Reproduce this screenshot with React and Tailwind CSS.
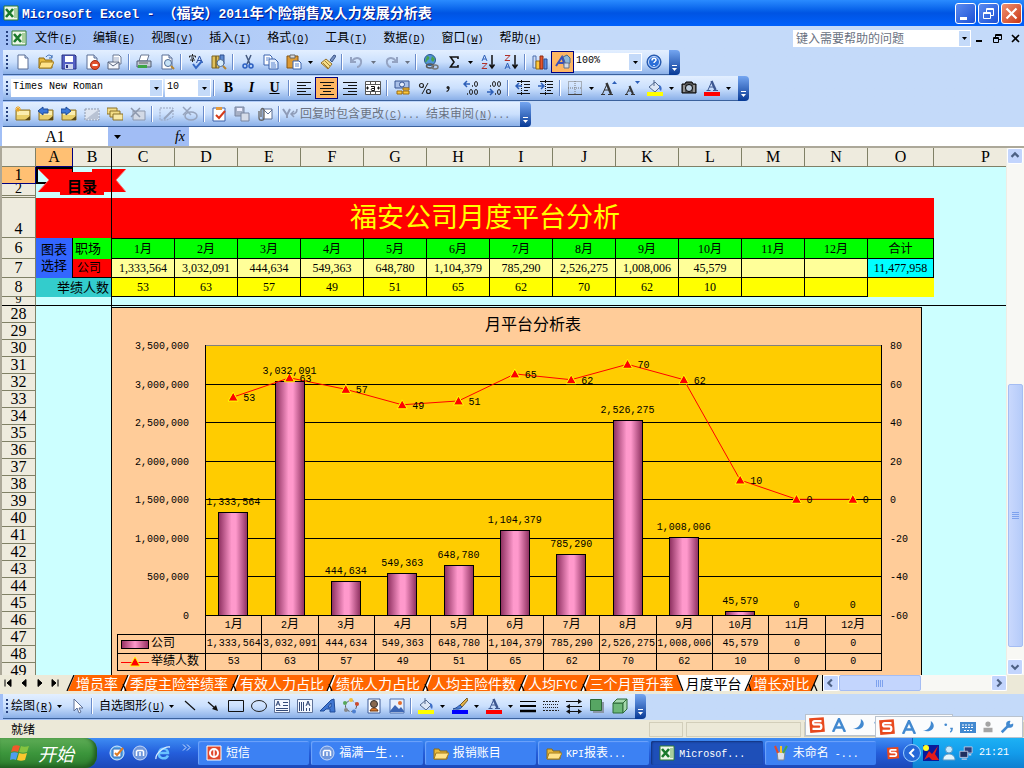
import React, { useState } from 'react';

const MONO = "font-[family-name:'Liberation_Mono','Noto_Sans_CJK_SC',monospace]";
const SERIF = "font-[family-name:'Liberation_Serif','Noto_Sans_CJK_SC',serif]";

const months = ['1月', '2月', '3月', '4月', '5月', '6月', '7月', '8月', '9月', '10月', '11月', '12月'];
const sales = [1333564, 3032091, 444634, 549363, 648780, 1104379, 785290, 2526275, 1008006, 45579, 0, 0];
const heads = [53, 63, 57, 49, 51, 65, 62, 70, 62, 10, 0, 0];
const columns = ['C', 'D', 'E', 'F', 'G', 'H', 'I', 'J', 'K', 'L', 'M', 'N'];
const lowerRows = Array.from({ length: 22 }, (_, i) => 28 + i);

const fmt = (n) => n.toLocaleString('en-US');

const menus = [
  ['文件', 'F'],
  ['编辑', 'E'],
  ['视图', 'V'],
  ['插入', 'I'],
  ['格式', 'O'],
  ['工具', 'T'],
  ['数据', 'D'],
  ['窗口', 'W'],
  ['帮助', 'H'],
];

const note = (
  <>
    <path d="M1 4h14v10H1z" fill="#e9cf6a" stroke="#8a7128" />
    <path d="M2 5h12v4H2z" fill="#fbeeb0" />
    <path d="M10 14l5-4v4z" fill="#5c4a16" />
  </>
);

const page = (
  <>
    <path d="M3 1h7l3 3v11H3z" fill="#fff" stroke="#5a6e96" />
    <path d="M10 1v3h3" fill="#c9d8f0" stroke="#5a6e96" />
  </>
);

const folder = (
  <>
    <path d="M1 4h5l1 2h7v8H1z" fill="#e8b93c" stroke="#8d6a12" />
    <path d="M3 8h13l-3 6H1z" fill="#ffe38a" stroke="#a37c1c" />
  </>
);

const picture = (
  <>
    <path d="M1 1h14v14H1z" fill="#e9f1fc" stroke="#4d6fae" />
    <path d="M1 13l5-6 4 4 2-2 3 4v1H1z" fill="#3c66b4" />
    <circle cx="11" cy="5" r="2" fill="#e46d2c" />
  </>
);

const bucket = (
  <>
    <path d="M2 7l6-5 5 5-5 5z" fill="#dce6f5" stroke="#53698f" />
    <path d="M7 0v6" stroke="#53698f" />
    <path d="M12 5c3 1 3 4 2 6-2-1-2-3-2-6z" fill="#3e6fc8" />
  </>
);

const excel = (
  <>
    <path d="M1 1h14v14H1z" fill="#eef7e9" stroke="#2f7d32" />
    <path d="M11 3h3v10h-3z" fill="#a7cf9c" />
    <path d="M3 4l7 8M10 4l-7 8" stroke="#1b7a2c" strokeWidth="2.6" />
  </>
);

const paintIcon = {
  new: page,
  open: (
    <>
      {folder}
      <path d="M8 3c2-3 5-2 6 0m0-2v3h-3" fill="none" stroke="#3466b0" />
    </>
  ),
  save: (
    <>
      <path d="M1 1h13l1 1v13H1z" fill="#5560c4" stroke="#2b3383" />
      <path d="M4 2h8v6H4z" fill="#fff" />
      <path d="M4 10h8v5H4z" fill="#cfd6ee" />
      <path d="M5 11h2v3H5z" fill="#2b3383" />
    </>
  ),
  permission: (
    <>
      {page}
      <circle cx="11" cy="11" r="4.5" fill="#e4502d" stroke="#a32c10" />
      <path d="M8.5 11h5" stroke="#fff" strokeWidth="2" />
    </>
  ),
  mail: (
    <>
      <path d="M6 1h6l2 2v7H6z" fill="#fff" stroke="#6a7893" />
      <path d="M7 4h5M7 6h5" stroke="#9aa9c5" />
      <path d="M1 8h11v7H1z" fill="#f3f6fb" stroke="#58657f" />
      <path d="M1 8l5 4 6-4" fill="none" stroke="#58657f" />
    </>
  ),
  print: (
    <>
      <path d="M5 1h8l-2 6H3z" fill="#fff" stroke="#6a7893" />
      <path d="M1 7h14v6H1z" fill="#c4cbd6" stroke="#4f5b70" />
      <path d="M2 11h9v3H2z" fill="#3ca545" />
      <path d="M3 9h9" stroke="#666" />
    </>
  ),
  preview: (
    <>
      {page}
      <circle cx="9" cy="9" r="3.5" fill="#c6e2f7" stroke="#4e6a94" />
      <path d="M12 12l3 3" stroke="#b5852d" strokeWidth="2" />
    </>
  ),
  spell: (
    <>
      <path d="M1.5 3.500V2h6v1.500M4.500 0v2M3 4h3L4.500 5.500V8M2 6h5" fill="none" stroke="#222" />
      <path d="M8.500 9l3-7 3 7M9.500 6.500h4" fill="none" stroke="#2d4f9e" />
      <path d="M5 10l3 4 6-7" fill="none" stroke="#3467c4" strokeWidth="2" />
    </>
  ),
  research: (
    <>
      <path d="M1 2h4v12H1zM5 2h3v12H5z" fill="#e1c15b" stroke="#7a6221" />
      <path d="M9 1h4v9H9z" fill="#5d8ad0" stroke="#2e4f8f" />
      <circle cx="9.500" cy="9" r="3.500" fill="#d6ebfa" stroke="#4e6a94" />
      <path d="M12 12l3 3" stroke="#b5852d" strokeWidth="2" />
    </>
  ),
  cut: (
    <>
      <path d="M6 1l4 9M11 1L7 10" stroke="#44597f" strokeWidth="1.500" />
      <circle cx="5" cy="12" r="2" fill="none" stroke="#2b5fc1" strokeWidth="1.500" />
      <circle cx="11" cy="12" r="2" fill="none" stroke="#2b5fc1" strokeWidth="1.500" />
    </>
  ),
  copy: (
    <>
      <path d="M1 1h6l2 2v8H1z" fill="#fff" stroke="#3a62ad" />
      <path d="M6 5h6l3 3v7H6z" fill="#e4eefc" stroke="#3a62ad" />
      <path d="M3 4h4M3 6h2M8 9h4M8 11h5M8 13h5" stroke="#5d86cf" />
    </>
  ),
  paste: (
    <>
      <path d="M1 2h11v12H1z" fill="#dd9a34" stroke="#855411" />
      <path d="M4 1h5v3H4z" fill="#ddd" stroke="#666" />
      <path d="M7 7h6l2 2v6H7z" fill="#fff" stroke="#3a62ad" />
      <path d="M9 10h4M9 12h4" stroke="#5d86cf" />
    </>
  ),
  brush: (
    <>
      <path d="M10 6l4-5 2 1-4 6z" fill="#7892c4" stroke="#3d5688" />
      <path d="M6 5l6 5-4 5-7-6z" fill="#f6df8a" stroke="#94702a" />
      <path d="M3 9l5 5M5 7l5 5" stroke="#a17c2e" />
    </>
  ),
  undo: <path d="M2 3v5h5M3 7c4-5 10-3 9 2-.5 2-2 4-4 4" fill="none" stroke="#94a3c2" strokeWidth="2" />,
  redo: <path d="M14 3v5H9M13 7C9 2 3 4 4 9c.5 2 2 4 4 4" fill="none" stroke="#94a3c2" strokeWidth="2" />,
  link: (
    <>
      <circle cx="7" cy="6" r="5.500" fill="#4f94d8" stroke="#27588f" />
      <path d="M4 2c3 0 3 3 1 4s-1 3-3 2M9 2l3 3-2 3-2-2z" fill="#48a24c" />
      <ellipse cx="7" cy="12" rx="3.500" ry="2" fill="none" stroke="#555" strokeWidth="1.500" />
      <ellipse cx="12" cy="13" rx="3" ry="2" fill="none" stroke="#777" strokeWidth="1.500" />
    </>
  ),
  sigma: <path d="M12 5V3H4.500L8 8l-3.500 5H12v-2" fill="none" stroke="#111" strokeWidth="1.600" />,
  az: (
    <>
      <path d="M2 7l2.500-6L7 7M3 5h3" fill="none" stroke="#2d5fb8" />
      <path d="M2 9.500h5l-5 5h5" fill="none" stroke="#b0302a" />
      <path d="M12 1v12M9.500 10.500L12 14l2.500-3.500" fill="none" stroke="#111" strokeWidth="1.500" />
    </>
  ),
  za: (
    <>
      <path d="M2 1.500h5l-5 5h5" fill="none" stroke="#b0302a" />
      <path d="M2 15l2.500-6L7 15M3 13h3" fill="none" stroke="#2d5fb8" />
      <path d="M12 1v12M9.500 10.500L12 14l2.500-3.500" fill="none" stroke="#111" strokeWidth="1.500" />
    </>
  ),
  chart: (
    <>
      <path d="M1 2h3v12H1z" fill="#cfdcf2" stroke="#4d6fae" />
      <path d="M4 7h4v8H4z" fill="#ffc93c" stroke="#97700f" />
      <path d="M8 2h3v13H8z" fill="#e4572e" stroke="#8c2b10" />
      <path d="M12 5h3v10h-3z" fill="#5c8ce0" stroke="#284f99" />
    </>
  ),
  drawing: (
    <>
      <path d="M8 3l4-2 3 3v5l-4 2z" fill="#8fb8d8" stroke="#46698f" />
      <path d="M1 12L7 3l3 9" fill="none" stroke="#3a50b8" strokeWidth="2" />
      <path d="M3 9h6" stroke="#3a50b8" strokeWidth="2" />
      <path d="M9 9h5v5H9z" fill="#d4dbe6" stroke="#65738a" />
    </>
  ),
  help: (
    <>
      <circle cx="8" cy="8" r="7" fill="#2c6fd8" stroke="#1b4a9c" />
      <circle cx="8" cy="8" r="5.500" fill="none" stroke="#cfe0fb" />
      <path d="M6 6.500c0-3 4-3 4-.5 0 1.500-2 1.500-2 3M8 11v1" fill="none" stroke="#fff" strokeWidth="1.500" />
    </>
  ),
  left: <path d="M1 2.500h14M1 5.500h9M1 8.500h14M1 11.500h9M1 14.500h14" stroke="#111" />,
  center: <path d="M1 2.500h14M4 5.500h8M1 8.500h14M4 11.500h8M1 14.500h14" stroke="#111" />,
  right: <path d="M1 2.500h14M6 5.500h9M1 8.500h14M6 11.500h9M1 14.500h14" stroke="#111" />,
  merge: (
    <>
      <path d="M.5 1.500h15v13H.5zM.5 4.500h15M.5 11.500h15M5.500 1.500v3M10.500 1.500v3M5.500 11.500v3M10.500 11.500v3" fill="#fff" stroke="#555" />
      <path d="M1 8h3M2.500 6.500v3M12 8h3M13.500 6.500v3M6 6.500h3.500v4H7c-1 0-1-2 0-2h2.500" fill="none" stroke="#111" />
    </>
  ),
  currency: (
    <>
      <path d="M1 1h14v7H1z" fill="#a9c0e8" stroke="#345291" />
      <circle cx="8" cy="4.500" r="2.500" fill="#e3ecfb" stroke="#345291" />
      <path d="M9 8h6v2H9zM9 11h6v3H9zM3 11h5v3H3z" fill="#ffc93c" stroke="#9c6c10" />
    </>
  ),
  percent: (
    <>
      <circle cx="4.500" cy="5.500" r="2" fill="none" stroke="#222" strokeWidth="1.200" />
      <circle cx="11.500" cy="11.500" r="2" fill="none" stroke="#222" strokeWidth="1.200" />
      <path d="M11 3L5 14" stroke="#222" />
    </>
  ),
  comma: (
    <>
      <circle cx="8" cy="7.500" r="1.500" fill="#222" />
      <path d="M9 7.500c0 2.500-1 3.500-2.500 4" fill="none" stroke="#222" strokeWidth="1.200" />
    </>
  ),
  incDec: (
    <>
      <path d="M1 4h6M4 1L1 4l3 3" fill="none" stroke="#2d5fb8" strokeWidth="1.500" />
      <path d="M9 6h1" stroke="#222" strokeWidth="1.500" />
      <ellipse cx="13" cy="4" rx="1.500" ry="2.500" fill="none" stroke="#222" />
      <path d="M4 14h1" stroke="#222" strokeWidth="1.500" />
      <ellipse cx="8" cy="12" rx="1.500" ry="2.500" fill="none" stroke="#222" />
      <ellipse cx="13" cy="12" rx="1.500" ry="2.500" fill="none" stroke="#222" />
    </>
  ),
  decDec: (
    <>
      <path d="M1 12h6M4 9l3 3-3 3" fill="none" stroke="#2d5fb8" strokeWidth="1.500" />
      <path d="M4 6h1M9 14h1" stroke="#222" strokeWidth="1.500" />
      <ellipse cx="8" cy="4" rx="1.500" ry="2.500" fill="none" stroke="#222" />
      <ellipse cx="13" cy="4" rx="1.500" ry="2.500" fill="none" stroke="#222" />
      <ellipse cx="13" cy="12" rx="1.500" ry="2.500" fill="none" stroke="#222" />
    </>
  ),
  outdent: (
    <>
      <path d="M2 1.500h13M9 4.500h6M9 7.500h6M9 10.500h4M2 13.500h13" stroke="#111" />
      <path d="M6.500 0v16" stroke="#111" strokeDasharray="1 1" />
      <path d="M7 6H1M4 3L1 6l3 3" fill="none" stroke="#2d5fb8" strokeWidth="1.500" />
    </>
  ),
  indent: (
    <>
      <path d="M2 1.500h13M9 4.500h6M9 7.500h6M9 10.500h4M2 13.500h13" stroke="#111" />
      <path d="M7.500 0v16" stroke="#111" strokeDasharray="1 1" />
      <path d="M0 6h6M3 3l3 3-3 3" fill="none" stroke="#2d5fb8" strokeWidth="1.500" />
    </>
  ),
  borders: (
    <>
      <path d="M1.500 1.500h13v13h-13zM8 1v13M1 8h14" fill="none" stroke="#777" strokeDasharray="1 1" />
      <path d="M1 14.500h14" stroke="#444" />
    </>
  ),
  bigA: (
    <>
      <path d="M1.500 14L6 4" stroke="#333" />
      <path d="M5.500 3l4.500 11" stroke="#333" strokeWidth="2.400" />
      <path d="M3 10h6M0 14.500h4M7 14.500h5" stroke="#333" />
      <path d="M11 4l2.500-3L16 4z" fill="#2d5fb8" />
    </>
  ),
  smallA: (
    <>
      <path d="M2.500 14L6 7" stroke="#333" />
      <path d="M5.500 6l3.500 8" stroke="#333" strokeWidth="2" />
      <path d="M4 11h4M1 14.500h3M7 14.500h4" stroke="#333" />
      <path d="M11 1h5l-2.500 3z" fill="#2d5fb8" />
    </>
  ),
  fill: (
    <>
      {bucket}
      <path d="M0 12h16v4H0z" fill="#ff0" />
    </>
  ),
  camera: (
    <>
      <path d="M1 4h3l1-2h6l1 2h3v9H1z" fill="#555" stroke="#000" />
      <circle cx="8" cy="8" r="3.500" fill="#bcd" stroke="#000" />
      <path d="M3 5v7M13 5v7" stroke="#ccc" />
    </>
  ),
  fontColor: (
    <>
      <path d="M4 10L8 1" stroke="#3c5791" />
      <path d="M7.500 1l4 9" stroke="#3c5791" strokeWidth="2.400" />
      <path d="M5.500 7h5M2.500 10.500h4M9 10.500h5" stroke="#3c5791" />
      <path d="M0 12h16v4H0z" fill="#f00" />
    </>
  ),
  noteNew: (
    <>
      {note}
      <path d="M3 0v6M0 3h6M1 1l4 4M5 1L1 5" stroke="#f0a51c" />
    </>
  ),
  notePrev: (
    <>
      {note}
      <path d="M0 5l5-4v2h5v4H5v2z" fill="#3b78d8" stroke="#1d4b9b" />
    </>
  ),
  noteNext: (
    <>
      {note}
      <path d="M10 5L5 1v2H0v4h5v2z" fill="#3b78d8" stroke="#1d4b9b" />
    </>
  ),
  noteGray: (
    <>
      <path d="M1 3h14v11H1z" fill="#dfe6f1" stroke="#8d98ad" strokeDasharray="2 1" />
      <path d="M2 13L14 4v9z" fill="#b9c3d4" />
    </>
  ),
  noteAll: (
    <>
      <path d="M0 2h10v6H0z" fill="#f3dd86" stroke="#8a7128" />
      <path d="M3 5h10v6H3z" fill="#f3dd86" stroke="#8a7128" />
      <path d="M6 8h10v6H6z" fill="#f8e9a6" stroke="#8a7128" />
    </>
  ),
  noteDel: (
    <>
      <path d="M3 5h12v9H3z" fill="#d3dae6" stroke="#8d98ad" />
      <path d="M1 2l9 9M10 2l-9 9" stroke="#8d98ad" strokeWidth="1.500" />
    </>
  ),
  inkShow: (
    <>
      <path d="M1 2h13v9L8 14H1z" fill="none" stroke="#97a4bd" strokeDasharray="2 1" />
      <path d="M5 13L14 4" stroke="#97a4bd" strokeWidth="2" />
    </>
  ),
  inkDel: (
    <>
      <ellipse cx="9" cy="10" rx="6" ry="4" fill="none" stroke="#97a4bd" strokeWidth="1.500" />
      <path d="M1 1l8 8M9 1L1 9" stroke="#97a4bd" strokeWidth="1.500" />
    </>
  ),
  task: (
    <>
      <path d="M2 2h12v13H2z" fill="#fff" stroke="#3c60a8" />
      <path d="M5 1h6v3H5z" fill="#e59a3c" />
      <path d="M5 9l3 3 6-7" fill="none" stroke="#d43a1a" strokeWidth="2" />
    </>
  ),
  update: (
    <>
      <path d="M1 1h9v9H1z" fill="#a7b1c6" stroke="#7985a0" />
      <path d="M3 2h5v3H3z" fill="#eef" />
      <path d="M7 7h8v8H7z" fill="#d6dce8" stroke="#7985a0" />
    </>
  ),
  attach: (
    <>
      <path d="M6 3h9v10H6z" fill="#fff" stroke="#5b6f95" />
      <path d="M7 4l4 4 4-4" fill="none" stroke="#5b6f95" />
      <path d="M2 5v7c0 3 5 3 5 0V4c0-2-3-2-3 0v7" fill="none" stroke="#666" strokeWidth="1.300" />
    </>
  ),
  reply: (
    <>
      <path d="M1 3l4 6 3-6M5 9v3" fill="none" stroke="#8f9cb8" strokeWidth="2" />
      <path d="M15 3c0 4-2 5-5 5M12 5l-3 3 3 3" fill="none" stroke="#8f9cb8" strokeWidth="1.500" />
    </>
  ),
  cursor: <path d="M4 1v12l3-3 2 5 2-1-2-4h4z" fill="#fff" stroke="#5d7098" />,
  line: <path d="M3 3l10 9" stroke="#111" strokeWidth="1.200" />,
  arrow: (
    <>
      <path d="M3 4l8 7" stroke="#111" strokeWidth="1.200" />
      <path d="M13 13l-6-2 4-4z" fill="#111" />
    </>
  ),
  rect: <path d="M.5 2.500h15v11H.5z" fill="none" stroke="#111" />,
  oval: <ellipse cx="8" cy="8" rx="7.500" ry="5.500" fill="none" stroke="#222" />,
  textbox: (
    <>
      <path d="M.5 1.500h15v13H.5z" fill="#f4f8ff" stroke="#5f7299" />
      <path d="M2 8l2-5 2 5M3 6h2M9 4.500h5M9 7.500h5M2 10.500h12M2 12.500h12" fill="none" stroke="#344a78" />
    </>
  ),
  vtextbox: (
    <>
      <path d="M.5 1.500h15v13H.5z" fill="#f4f8ff" stroke="#5f7299" />
      <path d="M2.500 4v9M4.500 4v9M6.500 4v9M9 8l2-5 2 5M10 6h2M9.500 10v3M12.500 10v3" fill="none" stroke="#344a78" />
    </>
  ),
  wordart: <path d="M0 13L11 2l3-1 1 13h-5v-3H6l-2 2zM8 9h3V5z" fill="#3f76d2" stroke="#1f4b98" />,
  diagram: (
    <>
      <circle cx="8" cy="8" r="5.500" fill="none" stroke="#555" strokeDasharray="3 2" />
      <circle cx="8" cy="2" r="2" fill="#f0c13a" />
      <circle cx="14" cy="6" r="2" fill="#cc4a2b" />
      <circle cx="11" cy="13.500" r="2" fill="#4d7fd0" />
      <circle cx="3" cy="12" r="2" fill="#888" />
      <circle cx="2" cy="5" r="2" fill="#57a75a" />
    </>
  ),
  clipart: (
    <>
      <path d="M2 1h12v14H2z" fill="#fff" stroke="#3c5b98" />
      <circle cx="8" cy="6" r="3.500" fill="#8a6a4e" stroke="#333" />
      <path d="M4 13c1-4 7-4 8 0z" fill="#e07b28" stroke="#6b3510" />
    </>
  ),
  picture,
  lineColor: (
    <>
      <path d="M15 0L8 7l2 2 6-7z" fill="#e2b34a" stroke="#7a5a1b" />
      <path d="M8 7l2 2c-2 3-6 2-9 2 4-1 5-3 7-4z" fill="#4a80d8" stroke="#254d94" />
      <path d="M0 12h16v4H0z" fill="#00f" />
    </>
  ),
  weight: (
    <>
      <path d="M0 3.500h16" stroke="#000" />
      <path d="M0 8h16" stroke="#000" strokeWidth="2" />
      <path d="M0 13h16" stroke="#000" strokeWidth="2.500" />
    </>
  ),
  dash: (
    <>
      <path d="M0 3.500h16M0 12.500h16" stroke="#222" strokeDasharray="2 1" />
      <path d="M0 6.500h16M0 9.500h16" stroke="#222" strokeDasharray="1 1" />
    </>
  ),
  arrows: (
    <>
      <path d="M0 3.500h13M3 8.500h13M3 13.500h10" stroke="#111" />
      <path d="M12 1l4 2.500L12 6zM4 6L0 8.500 4 11zM4 11L0 13.500 4 16zM12 11l4 2.500-4 2.500z" fill="#111" />
    </>
  ),
  shadow: (
    <>
      <path d="M4 4h11v11H4z" fill="#8a96a6" />
      <path d="M1.500 1.500h11v11h-11z" fill="#57a663" stroke="#2d6b38" />
    </>
  ),
  cube: (
    <>
      <path d="M1 5h10v10H1z" fill="#6db878" stroke="#2d6b38" />
      <path d="M1 5l4-4h10l-4 4zM11 5l4-4v10l-4 4z" fill="#a5d8ac" stroke="#2d6b38" />
    </>
  ),
  excel,
  folder,
  messenger: (
    <>
      <path d="M1 1h14v14H1z" fill="#e0482c" stroke="#fff" />
      <circle cx="8" cy="8" r="4" fill="none" stroke="#fff" strokeWidth="2" />
      <path d="M8 5v6" stroke="#fff" strokeWidth="1.500" />
    </>
  ),
  maxthon: (
    <>
      <circle cx="8" cy="8" r="7" fill="#6f97dc" stroke="#c6d9fb" />
      <path d="M4.500 11V6.500l1-1h5l1 1V11M8 7v4" fill="none" stroke="#fff" strokeWidth="1.500" />
    </>
  ),
  outlook: (
    <>
      <circle cx="8" cy="8" r="7" fill="#58a6e8" stroke="#d7ecff" />
      <path d="M4 4h8v8H4z" fill="#fff" stroke="#2f68b5" />
      <path d="M6 8l2 2 6-7" fill="none" stroke="#e07c20" strokeWidth="2" />
    </>
  ),
  ie: (
    <>
      <path d="M13 10.500c-2 4.500-10 3.500-9-2.500 1-6 9-5 9 0H5" fill="none" stroke="#69c2ff" strokeWidth="2.500" />
      <path d="M1 14C0 9 9 1 15 2" fill="none" stroke="#d7ecff" strokeWidth="1.300" />
    </>
  ),
  paint: (
    <>
      <path d="M4 7h8l-1 8H5z" fill="#dfe3ea" stroke="#7b8594" />
      <path d="M5 8L2 1" stroke="#e4472a" strokeWidth="2" />
      <path d="M8 8V1" stroke="#f2c02c" strokeWidth="2" />
      <path d="M10 8l4-7" stroke="#45a548" strokeWidth="2" />
    </>
  ),
  sogou: (
    <>
      <path d="M1 2l13-1 1 13-13 1z" fill="#e8491d" />
      <path d="M12 4.500H6c-2 0-2 3 0 3h4c2.500 0 2.500 4 0 4H4" fill="none" stroke="#fff" strokeWidth="2" />
    </>
  ),
  tooth: (
    <>
      <path d="M0 0h16v16H0z" fill="#0a1a9a" />
      <path d="M1 15L6 6l3 3 6-8-3 8 4 6H9l-3-3z" fill="#e31b1b" />
      <circle cx="3" cy="3" r="3" fill="#ff2" />
    </>
  ),
  person: (
    <>
      <circle cx="8" cy="4.500" r="3.500" fill="#c7e9fb" stroke="#5b97c4" />
      <path d="M2 15c0-8 12-8 12 0z" fill="#e4f4fc" stroke="#5b97c4" />
    </>
  ),
  network: (
    <>
      <path d="M6 1h9v7H6z" fill="#2b3e7a" stroke="#c3cde6" />
      <path d="M1 6h9v7H1z" fill="#20305f" stroke="#c3cde6" />
      <path d="M3 15h6M11 10h3" stroke="#c3cde6" strokeWidth="1.500" />
    </>
  ),
  moon: <path d="M10 1c7 4 3 15-9 11 6 0 10-5 9-11z" fill="#4289d0" />,
  punct: (
    <>
      <circle cx="5" cy="5" r="1.800" fill="#4289d0" />
      <path d="M11 10h2.500c0 3-1 4-2.500 5" fill="none" stroke="#4289d0" strokeWidth="2" />
    </>
  ),
  keyboard: (
    <>
      <path d="M0 3h16v11H0z" fill="#4289d0" />
      <path d="M2 6h12M2 8.500h12M4 11.500h8" stroke="#fff" strokeWidth="1.200" strokeDasharray="2 1" />
    </>
  ),
  user: (
    <>
      <circle cx="8" cy="4" r="3.500" fill="#a4a4a4" />
      <path d="M2 15V9h12v6z" fill="#a4a4a4" />
    </>
  ),
  wrench: (
    <>
      <path d="M2 14l7-7" stroke="#4289d0" strokeWidth="3" />
      <path d="M15 4l-3 1-1-1 1-3C7 0 6 5 8 8c3 2 8 1 7-4z" fill="#4289d0" />
    </>
  ),
};

const Icon = ({ name, className = 'h-4 w-4' }) => (
  <svg viewBox="0 0 16 16" className={`${className} shrink-0`} aria-hidden="true">
    {paintIcon[name]}
  </svg>
);

const Caret = ({ className = 'text-black' }) => (
  <svg viewBox="0 0 5 3" className={`h-[3px] w-[5px] shrink-0 ${className}`} aria-hidden="true">
    <path d="M0 0h5L2.500 3z" fill="currentColor" />
  </svg>
);

const Grip = () => (
  <span className="flex w-2 shrink-0 flex-col items-center gap-0.5">
    {[0, 1, 2, 3].map((n) => (
      <i key={n} className="h-0.5 w-0.5 bg-[#27417f]" />
    ))}
  </span>
);

const Sep = () => <span className="mx-[2px] h-4 w-0.5 shrink-0 border-r border-white bg-[#6a8ccb]" />;

const Btn = ({ icon, label, active, children }) => (
  <button
    type="button"
    aria-label={label || icon}
    className={`flex h-[22px] w-[23px] shrink-0 items-center justify-center ${
      active ? 'border border-[#000080] bg-[#ffb663]' : 'hover:bg-[#ffeec2]'
    }`}
  >
    {icon ? <Icon name={icon} /> : children}
  </button>
);

const Drop = ({ gray }) => (
  <button type="button" aria-label="更多选项" className="flex h-[22px] w-[11px] shrink-0 items-center justify-center">
    <Caret className={gray ? 'text-gray-500' : 'text-black'} />
  </button>
);

const Combo = ({ label, value, className }) => (
  <div className={`relative flex h-[18px] shrink-0 items-center bg-white ${className}`}>
    <select
      aria-label={label}
      defaultValue={value}
      className={`h-full w-full appearance-none bg-transparent pb-0.5 pl-0.5 text-[10px] leading-4 text-black outline-none ${MONO}`}
    >
      <option>{value}</option>
    </select>
    <span className="pointer-events-none absolute inset-y-px right-px flex w-3 items-center justify-center bg-[#c4daf9]">
      <Caret />
    </span>
  </div>
);

// docked toolbar with its rounded "more buttons" end
const Toolbar = ({ label, children }) => (
  <div role="toolbar" aria-label={label} className="flex h-[25px] w-fit pl-[3px]">
    <div className="flex items-center border-b border-[#3b619c] bg-linear-to-b from-[#e3efff] via-[#cbe0fd] to-[#8bb0e8] pr-1">
      <Grip />
      {children}
    </div>
    <button
      type="button"
      aria-label="工具栏选项"
      className="flex w-[11px] flex-col items-center justify-end gap-0.5 rounded-r-sm bg-linear-to-b from-[#75a6f1] to-[#053995] pb-1"
    >
      <i className="h-px w-[5px] bg-white" />
      <Caret className="text-white" />
    </button>
  </div>
);

const Key = ({ children }) => (
  <span className={`text-[10px] ${MONO}`}>
    (<u>{children}</u>)
  </span>
);

const TitleBar = () => (
  <header className="flex h-[26px] shrink-0 items-center bg-linear-to-b from-[#2a8bff] via-[#0054e3] to-[#0061fc] pr-0.5 pl-[3px] text-white">
    <Icon name="excel" />
    <h1 className="ml-[3px] flex-1 truncate text-[14px] leading-5 font-bold [text-shadow:1px_1px_#0a1883]">
      <span className={`text-[13px] ${MONO}`}>Microsoft Excel - </span>
      （福安）<span className={`text-[13px] ${MONO}`}>2011</span>年个险销售及人力发展分析表
    </h1>
    <div className="flex gap-0.5">
      <button type="button" aria-label="最小化" className="h-[21px] w-[21px] rounded-[3px] border border-white bg-linear-to-br from-[#5c8bf0] to-[#1c4fd4]">
        <svg viewBox="0 0 19 19" className="h-full w-full">
          <path d="M4 13h7v3H4z" fill="#fff" />
        </svg>
      </button>
      <button type="button" aria-label="还原" className="h-[21px] w-[21px] rounded-[3px] border border-white bg-linear-to-br from-[#5c8bf0] to-[#1c4fd4]">
        <svg viewBox="0 0 19 19" className="h-full w-full" fill="none" stroke="#fff">
          <path d="M7.500 8V4.500h7v7H12M7 5.500h8M4.500 8.500h7v6h-7zM4 9.500h8" />
        </svg>
      </button>
      <button type="button" aria-label="关闭" className="h-[21px] w-[21px] rounded-[3px] border border-white bg-linear-to-br from-[#f0906f] to-[#c8330d]">
        <svg viewBox="0 0 19 19" className="h-full w-full" stroke="#fff" strokeWidth="2.200">
          <path d="M4.500 4.500l10 10M14.500 4.500l-10 10" />
        </svg>
      </button>
    </div>
  </header>
);

const MenuBar = () => (
  <nav className="flex h-6 shrink-0 items-center pr-1 pl-[3px] text-[12px] leading-4">
    <Grip />
    <Icon name="excel" />
    <div className="flex">
      {menus.map(([text, key]) => (
        <button key={key} type="button" className="px-2 whitespace-nowrap">
          {text}
          <Key>{key}</Key>
        </button>
      ))}
    </div>
    <div className="ml-auto flex h-[17px] w-[178px] shrink-0 items-center bg-white">
      <input
        type="text"
        aria-label="键入需要帮助的问题"
        placeholder="键入需要帮助的问题"
        className="min-w-0 flex-1 pl-[3px] text-[12px] leading-4 outline-none placeholder:text-gray-500"
      />
      <span className="mr-px flex h-[15px] w-[11px] items-center justify-center bg-[#c4daf9]">
        <Caret />
      </span>
    </div>
    <div className="flex w-[49px] shrink-0 items-center justify-between pl-1">
      <button type="button" aria-label="最小化窗口">
        <svg viewBox="0 0 9 9" className="h-[9px] w-[9px]">
          <path d="M1 6h6v2H1z" />
        </svg>
      </button>
      <button type="button" aria-label="还原窗口">
        <svg viewBox="0 0 9 9" className="h-[9px] w-[9px]" fill="none" stroke="#000">
          <path d="M2.500 3V.5h6v5H6M2 1.500h7M.5 3.500h5v5h-5zM0 4.500h6" />
        </svg>
      </button>
      <button type="button" aria-label="关闭窗口">
        <svg viewBox="0 0 9 9" className="h-[9px] w-[9px]" stroke="#000" strokeWidth="1.600">
          <path d="M1 1l7 7M8 1L1 8" />
        </svg>
      </button>
    </div>
  </nav>
);

const Toolbars = () => (
  <div className="flex shrink-0 flex-col gap-px text-[12px] leading-4">
    <Toolbar label="常用">
      <Btn icon="new" />
      <Btn icon="open" />
      <Btn icon="save" />
      <Btn icon="permission" />
      <Btn icon="mail" />
      <Sep />
      <Btn icon="print" />
      <Btn icon="preview" />
      <Sep />
      <Btn icon="spell" />
      <Btn icon="research" />
      <Sep />
      <Btn icon="cut" />
      <Btn icon="copy" />
      <Btn icon="paste" />
      <Drop />
      <Btn icon="brush" />
      <Sep />
      <Btn icon="undo" />
      <Drop gray />
      <Btn icon="redo" />
      <Drop gray />
      <Sep />
      <Btn icon="link" />
      <Btn icon="sigma" />
      <Drop />
      <Btn icon="az" />
      <Btn icon="za" />
      <Sep />
      <Btn icon="chart" />
      <Btn icon="drawing" active />
      <Combo label="显示比例" value="100%" className="w-[68px]" />
      <Btn icon="help" />
    </Toolbar>
    <Toolbar label="格式">
      <Combo label="字体" value="Times New Roman" className="w-[152px]" />
      <span className="w-0.5" />
      <Combo label="字号" value="10" className="w-[46px]" />
      <Sep />
      <Btn label="加粗">
        <b className={`text-[14px] ${SERIF}`}>B</b>
      </Btn>
      <Btn label="倾斜">
        <b className={`text-[14px] italic ${SERIF}`}>I</b>
      </Btn>
      <Btn label="下划线">
        <b className={`text-[14px] underline ${SERIF}`}>U</b>
      </Btn>
      <Sep />
      <Btn icon="left" />
      <Btn icon="center" active />
      <Btn icon="right" />
      <Btn icon="merge" />
      <Sep />
      <Btn icon="currency" />
      <Btn icon="percent" />
      <Btn icon="comma" />
      <Btn icon="incDec" />
      <Btn icon="decDec" />
      <Sep />
      <Btn icon="outdent" />
      <Btn icon="indent" />
      <Sep />
      <Btn icon="borders" />
      <Drop />
      <Btn icon="bigA" />
      <Btn icon="smallA" />
      <Btn icon="fill" />
      <Drop />
      <Btn icon="camera" />
      <Btn icon="fontColor" />
      <Drop />
    </Toolbar>
    <Toolbar label="审阅">
      <Btn icon="noteNew" />
      <Btn icon="notePrev" />
      <Btn icon="noteNext" />
      <Btn icon="noteGray" />
      <Btn icon="noteAll" />
      <Btn icon="noteDel" />
      <Sep />
      <Btn icon="inkShow" />
      <Btn icon="inkDel" />
      <Sep />
      <Btn icon="task" />
      <Btn icon="update" />
      <Btn icon="attach" />
      <Sep />
      <button type="button" className="flex items-center gap-0.5 whitespace-nowrap text-gray-500">
        <Icon name="reply" />
        <span>
          回复时包含更改<Key>C</Key>
          <span className={`text-[10px] ${MONO}`}>...</span>
        </span>
      </button>
      <button type="button" className="px-1.5 whitespace-nowrap text-gray-500">
        结束审阅<Key>N</Key>
        <span className={`text-[10px] ${MONO}`}>...</span>
      </button>
    </Toolbar>
  </div>
);

const FormulaBar = () => (
  <div className={`flex h-[21px] shrink-0 border-b-2 border-[#aca899] pl-0.5 ${SERIF}`}>
    <input aria-label="名称框" defaultValue="A1" className="w-[106px] bg-white text-center text-[16px] leading-4 outline-none" />
    <div className="flex w-[81px] items-center justify-between bg-[#a1bdf5] pr-1 pl-1.5">
      <svg viewBox="0 0 7 4" className="h-1 w-[7px]">
        <path d="M0 0h7L3.500 4z" />
      </svg>
      <span className="text-[14px] leading-4 italic">fx</span>
    </div>
    <input aria-label="编辑栏" className="min-w-0 flex-1 bg-white outline-none" />
  </div>
);

// plot geometry in px, category width derives from the plot width
const PLOT = { x: 93, y: 37, w: 676, h: 270 };
const STEP = PLOT.w / 12;
const cx = (i) => PLOT.x + STEP * (i + 0.5);
const barY = (v) => PLOT.y + PLOT.h * (1 - v / 3500000);
const lineY = (v) => PLOT.y + (PLOT.h * (80 - v)) / 140;

const Marker = ({ x, y }) => (
  <path d={`M${x} ${y - 5}l5 9h-10z`} fill="#f00" stroke="#ff0" />
);

const Chart = () => (
  <figure className="absolute top-[159px] left-[109px] w-[811px] border border-black bg-[#ffcc99] pb-4">
    <svg width="809" height="307" className={`block overflow-visible text-[10px] ${MONO}`} role="img" aria-label="月平台分析表">
      <defs>
        <linearGradient id="bar">
          <stop offset="0" stopColor="#8c2e5e" />
          <stop offset="0.45" stopColor="#ff99cc" />
          <stop offset="0.6" stopColor="#ff99cc" />
          <stop offset="1" stopColor="#8c2e5e" />
        </linearGradient>
      </defs>
      <text x="421" y="22" textAnchor="middle" fontSize="16">
        月平台分析表
      </text>
      <rect x={PLOT.x} y={PLOT.y} width={PLOT.w} height={PLOT.h} fill="#fc0" />
      <g shapeRendering="crispEdges" stroke="#000">
        {[0, 1, 2, 3, 4, 5, 6].map((n) => {
          const y = Math.round(PLOT.y + (PLOT.h * n) / 7) + 0.5;
          return <path key={n} d={`M${PLOT.x} ${y}h${PLOT.w}`} stroke={n ? '#000' : '#808080'} />;
        })}
        <path d={`M${PLOT.x + 0.5} ${PLOT.y}v${PLOT.h}M${PLOT.x + PLOT.w + 0.5} ${PLOT.y}v${PLOT.h}`} />
      </g>
      {[0, 1, 2, 3, 4, 5, 6, 7].map((n) => {
        const y = PLOT.y + (PLOT.h * n) / 7 + 4;
        return (
          <g key={n}>
            <text x="77" y={y} textAnchor="end">
              {fmt(3500000 - n * 500000)}
            </text>
            <text x="778" y={y}>
              {80 - n * 20}
            </text>
          </g>
        );
      })}
      {sales.map((v, i) =>
        v > 0 ? (
          <rect
            key={months[i]}
            x={Math.round(cx(i) - 14) - 0.5}
            y={Math.round(barY(v)) + 0.5}
            width="29"
            height={PLOT.y + PLOT.h - Math.round(barY(v))}
            fill="url(#bar)"
            stroke="#000"
          />
        ) : null
      )}
      <polyline points={heads.map((v, i) => `${cx(i)},${lineY(v)}`).join(' ')} fill="none" stroke="#f00" />
      {heads.map((v, i) => (
        <g key={months[i]}>
          <Marker x={cx(i)} y={lineY(v)} />
          <text x={cx(i) + 10} y={lineY(v) + 4}>
            {v}
          </text>
          <text x={cx(i)} y={barY(sales[i]) - 7} textAnchor="middle">
            {fmt(sales[i])}
          </text>
        </g>
      ))}
    </svg>
    <table className={`ml-[5px] w-[765px] table-fixed border-collapse text-center text-[10px] leading-3 ${MONO}`}>
      <tbody>
        <tr className="h-[19px]">
          <td className="w-[88px] border-r border-b border-black p-0" />
          {months.map((m) => (
            <th key={m} scope="col" className="border border-black p-0 font-normal">
              {m.slice(0, -1)}
              <span className="text-[12px]">月</span>
            </th>
          ))}
        </tr>
        <tr className="h-[19px]">
          <th scope="row" className="border border-black p-0 font-normal">
            <div className="flex items-center gap-0.5 pl-[3px] text-[12px]">
              <i className="h-[9px] w-7 border border-black bg-linear-to-r from-[#993366] via-[#ff99cc] to-[#993366]" />
              公司
            </div>
          </th>
          {sales.map((v, i) => (
            <td key={months[i]} className="border border-black p-0">
              {fmt(v)}
            </td>
          ))}
        </tr>
        <tr className="h-[17px]">
          <th scope="row" className="border border-black p-0 font-normal">
            <div className="flex items-center gap-0.5 pl-[3px] text-[12px] whitespace-nowrap">
              <svg viewBox="0 0 28 10" className="h-2.5 w-7 shrink-0">
                <path d="M0 5.500h28" stroke="#f00" />
                <Marker x={14} y={5} />
              </svg>
              举绩人数
            </div>
          </th>
          {heads.map((v, i) => (
            <td key={months[i]} className="border border-black p-0">
              {v}
            </td>
          ))}
        </tr>
      </tbody>
    </table>
  </figure>
);

const rowHead = 'border-r border-b border-[#808066] bg-[#eeebde] p-0 font-normal';

const Sheet = () => (
  <div className="relative min-w-0 flex-1 overflow-hidden bg-[#ccffff]">
    <table className={`w-[1036px] table-fixed border-separate border-spacing-0 text-center text-[12px] leading-3 ${SERIF}`}>
      <colgroup>
        <col className="w-[34px]" />
        <col className="w-[37px]" />
        <col className="w-[39px]" />
        {columns.map((c) => (
          <col key={c} className="w-[63px]" />
        ))}
        <col className="w-[66px]" />
        <col />
      </colgroup>
      <thead>
        <tr className="h-[19px] text-[16px] leading-4">
          <th className={rowHead} />
          <th className="border-r border-b border-[#000080] bg-[#ffc073] p-0 font-normal">A</th>
          {['B', ...columns, 'O', 'P'].map((c) => (
            <th key={c} scope="col" className={rowHead}>
              {c}
            </th>
          ))}
        </tr>
      </thead>
      <tbody>
        <tr className="h-[17px] text-[16px] leading-4">
          <th className="border-r border-b border-[#000080] bg-[#ffc073] p-0 font-normal">1</th>
          <td className="border-2 border-black p-0" />
          <td colSpan={15} className="p-0" />
        </tr>
        <tr className="h-3 text-[14px] leading-3">
          <th className={rowHead}>
            <div className="flex h-[11px] items-end justify-center overflow-hidden">2</div>
          </th>
          <td colSpan={16} className="p-0" />
        </tr>
        <tr className="h-0.5">
          <th className={rowHead} />
          <td colSpan={16} className="p-0" />
        </tr>
        <tr className="h-10">
          <th className={`${rowHead} align-bottom text-[16px] leading-4`}>4</th>
          <td colSpan={15} className="bg-[#ff0000] p-0 text-[27px] leading-8 text-[#ffff00]">
            福安公司月度平台分析
          </td>
          <td className="p-0" />
        </tr>
        <tr className="h-[21px]">
          <th className={`${rowHead} text-[16px] leading-4`}>6</th>
          <td rowSpan={2} className="border-r border-black bg-[#3366ff] p-0 text-[13px] leading-4">
            图表
            <br />
            选择
          </td>
          <td className="bg-[#00ff00] p-0 pl-0.5 text-left text-[13px]">职场</td>
          {months.map((m) => (
            <td key={m} className="border-t border-r border-b border-black bg-[#00ff00] p-0">
              {m}
            </td>
          ))}
          <td className="border-t border-r border-b border-black bg-[#00ff00] p-0">合计</td>
          <td className="p-0" />
        </tr>
        <tr className="h-[19px]">
          <th className={`${rowHead} text-[16px] leading-4`}>7</th>
          <td className="border-b border-black bg-[#ff0000] p-0 pl-1 text-left">公司</td>
          {sales.map((v, i) => (
            <td key={months[i]} className="border-r border-b border-black bg-[#ffff99] p-0">
              {v ? fmt(v) : ''}
            </td>
          ))}
          <td className="border-r border-b border-black bg-[#00ffff] p-0">11,477,958</td>
          <td className="p-0" />
        </tr>
        <tr className="h-[19px]">
          <th className={`${rowHead} text-[16px] leading-4`}>8</th>
          <td colSpan={2} className="bg-[#33cccc] p-0 pr-[3px] text-right text-[13px]">
            举绩人数
          </td>
          {heads.map((v, i) => (
            <td key={months[i]} className="border-r border-b border-black bg-[#ffff00] p-0">
              {v || ''}
            </td>
          ))}
          <td className="bg-[#ffff00] p-0" />
          <td className="p-0" />
        </tr>
        <tr className="h-[9px] text-[12px] leading-3">
          <th className="border-r border-b border-r-[#808066] border-b-black bg-[#eeebde] p-0 font-normal">
            <div className="flex h-2 items-end justify-center overflow-hidden">9</div>
          </th>
          <td colSpan={16} className="border-b border-black p-0" />
        </tr>
        {lowerRows.map((n) => (
          <tr key={n} className="h-[17px] text-[16px] leading-4">
            <th className={rowHead}>{n}</th>
            <td colSpan={16} className="p-0" />
          </tr>
        ))}
      </tbody>
    </table>
    <a href="#toc" className="absolute top-5 left-9 flex h-7 w-[88px] items-end justify-center pb-0.5 text-[15px] leading-4 font-bold text-black">
      <svg viewBox="0 0 88 28" className="absolute inset-0 h-full w-full" aria-hidden="true">
        <path d="M0 1h34v3h20V1h34L78 12l10 12H66v3H22v-3H0l11-12z" fill="#f00" />
        <path d="M0 1l11 11L0 24M88 1L78 12l10 12" fill="none" stroke="#f66" />
      </svg>
      <span className="relative">目录</span>
    </a>
    <Chart />
    {/* freeze pane line */}
    <div className="absolute inset-y-0 left-[109px] w-px bg-black" />
  </div>
);

const arrowPaths = {
  up: 'M4 9l4-4 4 4',
  down: 'M4 6l4 4 4-4',
  left: 'M9 4L5 8l4 4',
  right: 'M6 4l4 4-4 4',
};

const ScrollButton = ({ dir, label }) => (
  <button type="button" aria-label={label} className="h-4 w-4 shrink-0 rounded-xs border border-white bg-[#c3d5fd]">
    <svg viewBox="0 0 16 16" className="h-full w-full" fill="none" stroke="#4d6185" strokeWidth="2.500">
      <path d={arrowPaths[dir]} />
    </svg>
  </button>
);

const VScroll = () => (
  <div className="flex w-[18px] shrink-0 flex-col items-center border-l border-[#eeede5] bg-[#f8f8f4] pr-px">
    <ScrollButton dir="up" label="向上滚动" />
    <div className="grow-[224]" />
    <div className="flex w-[15px] grow-[259] flex-col items-center justify-center gap-px rounded-xs border border-[#a5bdf3] bg-linear-to-r from-[#c9d8fd] to-[#b5cbf9]">
      {[0, 1, 2, 3].map((n) => (
        <i key={n} className="h-px w-[7px] bg-[#7ea2ee]" />
      ))}
    </div>
    <div className="grow-[12]" />
    <ScrollButton dir="down" label="向下滚动" />
  </div>
);

const tabs = ['增员率', '季度主险举绩率', '有效人力占比', '绩优人力占比', '人均主险件数', '人均FYC', '三个月晋升率', '月度平台', '增长对比'];

const TabEdge = ({ type }) => (
  <svg viewBox="0 0 12 16" className="h-4 w-3 shrink-0" aria-hidden="true">
    {type === 'first' && (
      <>
        <path d="M0 0h12v16H0z" fill="#ece9d8" />
        <path d="M4 16L11 0h1v16z" fill="#ff6600" />
        <path d="M3 16L10 0" stroke="#000" strokeWidth="1.300" />
      </>
    )}
    {type === 'mid' && (
      <>
        <path d="M0 0h12v16H0z" fill="#ff6600" />
        <path d="M3 16L10 0h2L6 16z" fill="#fff" />
        <path d="M3 16L10 0M5 9l3 7" stroke="#000" strokeWidth="1.200" />
      </>
    )}
    {type === 'active' && (
      <>
        <path d="M0 0h12v16H0z" fill="#fff" />
        <path d="M0 0h3l5 16H0z" fill="#ff6600" />
        <path d="M3 0l6 16" stroke="#000" strokeWidth="1.300" />
      </>
    )}
    {type === 'after' && (
      <>
        <path d="M0 0h12v16H0z" fill="#ff6600" />
        <path d="M0 0h11L4 16H0z" fill="#fff" />
        <path d="M3 16L10 0M7 9l2 7" stroke="#000" strokeWidth="1.200" />
      </>
    )}
    {type === 'last' && (
      <>
        <path d="M0 0h12v16H0z" fill="#ece9d8" />
        <path d="M0 0h8L1 16H0z" fill="#ff6600" />
        <path d="M1 16L8 0M4 9l3 7" stroke="#000" strokeWidth="1.200" />
      </>
    )}
  </svg>
);

const edgeType = (i, current) => {
  if (i === current) return 'active';
  if (i === current + 1) return 'after';
  return i === 0 ? 'first' : 'mid';
};

const SheetTabs = () => {
  const [current, setCurrent] = useState(7);
  const navPaths = ['M4 4v7M10 4L6 7.500 10 11z', 'M9 4L5 7.500 9 11z', 'M5 4l4 3.500L5 11z', 'M10 4v7M4 4l4 3.500L4 11z'];

  return (
    <div className="flex h-[19px] shrink-0 border-b-[3px] border-[#ece9d8] bg-[#ece9d8] pl-px">
      <div className="flex w-[63px] shrink-0 items-center">
        {navPaths.map((d) => (
          <button key={d} type="button" aria-label="滚动工作表" className="h-4 flex-1">
            <svg viewBox="0 0 14 15" className="h-4 w-[14px]" stroke="#000">
              <path d={d} />
            </svg>
          </button>
        ))}
      </div>
      <div role="tablist" className="flex shrink-0 text-[14px] leading-4 whitespace-nowrap">
        {tabs.map((t, i) => (
          <React.Fragment key={t}>
            <TabEdge type={edgeType(i, current)} />
            <button
              type="button"
              role="tab"
              aria-selected={i === current}
              onClick={() => setCurrent(i)}
              className={i === current ? 'bg-white text-black' : 'bg-[#ff6600] text-white'}
            >
              {t.replace('FYC', '')}
              {t.includes('FYC') && <span className="font-[family-name:'Liberation_Mono',monospace] text-[12px]">FYC</span>}
            </button>
          </React.Fragment>
        ))}
        <TabEdge type="last" />
      </div>
      <div className="flex min-w-0 flex-1 border-l border-black bg-[#f8f8f4]">
        <ScrollButton dir="left" label="向左滚动" />
        <div className="flex w-[82px] items-center justify-center gap-px rounded-xs border border-[#a5bdf3] bg-[#c3d5fd]">
          {[0, 1, 2, 3].map((n) => (
            <i key={n} className="h-[7px] w-px bg-[#7ea2ee]" />
          ))}
        </div>
        <div className="flex-1" />
        <ScrollButton dir="right" label="向右滚动" />
      </div>
      <div className="w-[17px] shrink-0" />
    </div>
  );
};

const DrawBar = () => (
  <div className="flex h-[26px] shrink-0 text-[12px] leading-4">
    <Toolbar label="绘图">
      <button type="button" className="flex items-center gap-1 whitespace-nowrap">
        <span>
          绘图<Key>R</Key>
        </span>
        <Caret />
      </button>
      <span className="w-1" />
      <Btn icon="cursor" />
      <Sep />
      <button type="button" className="flex items-center gap-1 px-1 whitespace-nowrap">
        <span>
          自选图形<Key>U</Key>
        </span>
        <Caret />
      </button>
      <Btn icon="line" />
      <Btn icon="arrow" />
      <Btn icon="rect" />
      <Btn icon="oval" />
      <Btn icon="textbox" />
      <Btn icon="vtextbox" />
      <Btn icon="wordart" />
      <Btn icon="diagram" />
      <Btn icon="clipart" />
      <Btn icon="picture" />
      <Sep />
      <Btn icon="fill" />
      <Drop />
      <Btn icon="lineColor" />
      <Drop />
      <Btn icon="fontColor" />
      <Drop />
      <Btn icon="weight" />
      <Btn icon="dash" />
      <Btn icon="arrows" />
      <Btn icon="shadow" />
      <Btn icon="cube" />
    </Toolbar>
  </div>
);

const ImeBar = ({ className }) => (
  <div className={`absolute flex h-[22px] w-[148px] items-center justify-between border border-[#b9c3cf] bg-[#fbfcfd] pr-2 pl-0.5 ${className}`}>
    <Icon name="sogou" className="h-[18px] w-[18px]" />
    <svg viewBox="0 0 14 14" className="h-[14px] w-[14px] shrink-0" fill="none" stroke="#4289d0" strokeWidth="2.500">
      <path d="M1 14L7 1l6 13M3.500 9.500h7" />
    </svg>
    <Icon name="moon" className="h-3.5 w-3.5" />
    <Icon name="punct" className="h-3 w-3" />
    <Icon name="keyboard" />
    <Icon name="user" className="h-3 w-3" />
    <Icon name="wrench" className="h-3.5 w-3.5" />
  </div>
);

const StatusBar = () => (
  <div className="relative flex h-[18px] shrink-0 items-center bg-[#ece9d8] pl-[11px] text-[12px] leading-4">
    就绪
    <div className="ml-auto flex h-[15px] w-[375px] gap-[3px]">
      <i className="w-[34px] border border-[#d2ceba]" />
      <i className="w-[115px] border border-[#d2ceba]" />
      <i className="flex-1 border border-[#d2ceba]" />
    </div>
    <ImeBar className="right-[71px] bottom-0.5" />
    <ImeBar className="right-px bottom-0" />
  </div>
);

const tasks = [
  ['messenger', '短信', ''],
  ['maxthon', '福满一生', '...'],
  ['folder', '报销账目', ''],
  ['folder', 'KPI报表', '...'],
  ['excel', 'Microsof', '...'],
  ['paint', '未命名', ' -...'],
];

const Taskbar = () => (
  <footer className="relative flex h-[30px] shrink-0 items-stretch bg-linear-to-b from-[#3f8cf3] via-[#245edb] to-[#1c48b8] text-white">
    <button
      type="button"
      className="flex w-[97px] shrink-0 items-center gap-2 rounded-r-xl bg-linear-to-b from-[#5eac56] via-[#3c963c] to-[#2c7a2c] pl-2.5 text-[18px] leading-6 italic shadow-[inset_-3px_-2px_4px_#1f5a1f]"
    >
      <svg viewBox="0 0 20 18" className="h-[18px] w-5" aria-hidden="true">
        <path d="M3 2c2-1 5-1 7 0L8 8C6 7 3 7 1 8z" fill="#f0592a" />
        <path d="M11 2c2 1 5 1 8 0l-2 6c-3 1-5 1-8 0z" fill="#86c440" />
        <path d="M1 9c2-1 5-1 7 0l-2 7c-2-1-4-1-6 0z" fill="#4f9df0" />
        <path d="M9 9c3 1 5 1 8 0l-2 7c-3 1-5 1-8 0z" fill="#fbc72e" />
      </svg>
      开始
    </button>
    <div className="flex w-[101px] shrink-0 items-center gap-[7px] pl-3">
      <Icon name="outlook" />
      <Icon name="maxthon" />
      <Icon name="ie" />
      <svg viewBox="0 0 9 7" className="mb-3 ml-1 h-[7px] w-[9px]" fill="none" stroke="#cfe0ff">
        <path d="M1 .5l3 3-3 3M5 .5l3 3-3 3" />
      </svg>
    </div>
    <div className="flex min-w-0 flex-1 gap-0.5 py-[3px] pr-1">
      {tasks.map(([icon, text, tail]) => (
        <button
          key={text}
          type="button"
          className={`flex min-w-0 flex-1 items-center gap-1 rounded-xs px-2 text-[12px] leading-4 whitespace-nowrap ${
            icon === 'excel' ? 'bg-[#1e4fb8] shadow-[inset_1px_1px_2px_#12317a]' : 'bg-[#3c81f3] shadow-[inset_1px_1px_1px_#6fa5fb]'
          }`}
        >
          <Icon name={icon} />
          <span>
            {text === 'Microsof' ? <span className={`text-[10px] ${MONO}`}>{text}</span> : null}
            {text === 'KPI报表' ? (
              <>
                <span className={`text-[10px] ${MONO}`}>KPI</span>报表
              </>
            ) : null}
            {text !== 'Microsof' && text !== 'KPI报表' ? text : null}
            <span className={`text-[10px] whitespace-pre ${MONO}`}>{tail}</span>
          </span>
        </button>
      ))}
    </div>
    <div className="flex shrink-0 items-center pl-1.5">
      <Icon name="sogou" className="h-3.5 w-3.5" />
    </div>
    <div className="ml-3 flex w-[112px] shrink-0 items-center gap-0.5 border-l border-[#0d5fc0] bg-linear-to-b from-[#1db1f4] via-[#139ceb] to-[#0f7fd0]">
      <button type="button" aria-label="隐藏图标" className="-ml-2.5 h-[18px] w-[18px] shrink-0 rounded-full border border-[#9bd0ff] bg-[#2568d8]">
        <svg viewBox="0 0 16 16" className="h-4 w-4" fill="none" stroke="#fff" strokeWidth="2">
          <path d="M10 4L6 8l4 4" />
        </svg>
      </button>
      <Icon name="tooth" />
      <Icon name="person" />
      <Icon name="network" className="h-3.5 w-3.5" />
      <time className={`ml-1 text-[10px] leading-4 ${MONO}`}>21:21</time>
    </div>
  </footer>
);

export default function App() {
  return (
    <div className="flex h-screen flex-col overflow-hidden bg-[#ece9d8] font-[family-name:'Noto_Sans_CJK_SC',sans-serif] text-black">
      <TitleBar />
      <div className="flex shrink-0 flex-col bg-linear-to-r from-[#a1bff6] to-[#c4daf9] to-50%">
        <MenuBar />
        <Toolbars />
        <FormulaBar />
      </div>
      <main className="flex min-h-0 flex-1 border-l-2 border-[#aca899]">
        <Sheet />
        <VScroll />
      </main>
      <SheetTabs />
      <div className="flex shrink-0 flex-col bg-linear-to-r from-[#a1bff6] to-[#c4daf9] to-50%">
        <DrawBar />
      </div>
      <div className="relative z-10">
        <StatusBar />
      </div>
      <Taskbar />
    </div>
  );
}
